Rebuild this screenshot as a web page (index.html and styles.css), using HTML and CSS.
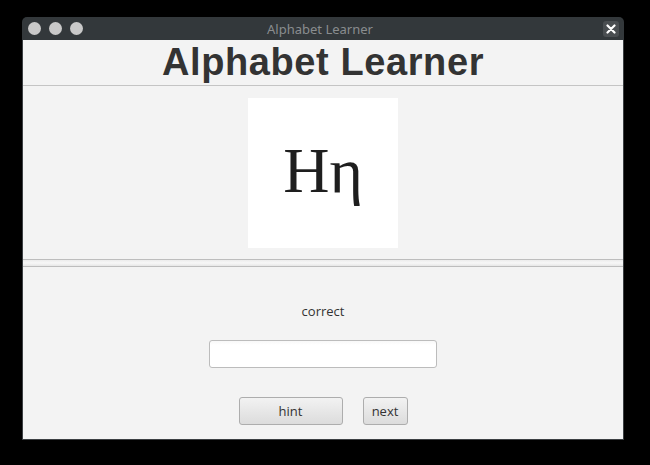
FILE: index.html
```html
<!DOCTYPE html>
<html>
<head>
<meta charset="utf-8">
<link rel="stylesheet" href="styles.css">
</head>
<body>
<div class="window">
  <div class="titlebar">
    <div class="dots"><span class="dot"></span><span class="dot"></span><span class="dot"></span></div>
    <div class="wtitle">Alphabet Learner</div>
    <div class="close">
      <svg width="10" height="10" viewBox="0 0 10 10"><path d="M1.5 1.5 L8.5 8.5 M8.5 1.5 L1.5 8.5" stroke="#ffffff" stroke-width="2.2" stroke-linecap="round"/></svg>
    </div>
  </div>
  <div class="content">
    <div class="header">Alphabet Learner</div>
    <div class="letter-area">
      <div class="letter-box">Hη</div>
    </div>
    <div class="divider"></div>
    <div class="bottom">
      <div class="status">correct</div>
      <input class="field" type="text">
      <div class="buttons">
        <button class="btn hint">hint</button>
        <button class="btn next">next</button>
      </div>
    </div>
  </div>
</div>
</body>
</html>
```
FILE: styles.css
```css
html, body {
  margin: 0;
  padding: 0;
  background: #000;
  width: 650px;
  height: 465px;
  overflow: hidden;
}
.window {
  margin: 17px 0 0 22px;
  width: 602px;
  height: 423px;
  display: flex;
  flex-direction: column;
}
.titlebar {
  height: 23px;
  background: #33383b;
  border-radius: 5px 5px 0 0;
  display: flex;
  align-items: center;
  font-family: "Noto Sans", "Open Sans", sans-serif;
}
.dots {
  display: flex;
  gap: 8px;
  padding-left: 6px;
}
.dot {
  width: 13px;
  height: 13px;
  border-radius: 50%;
  background: #c9c9c9;
}
.wtitle {
  flex: 1;
  text-align: center;
  color: #8a8d8f;
  font-size: 13px;
  padding-right: 46px;
}
.close {
  width: 16px;
  height: 16px;
  margin-right: 5px;
  display: flex;
  align-items: center;
  justify-content: center;
  border-radius: 3px;
  background: #4a4e51;
}
.content {
  flex: 1;
  background: #f3f3f3;
  border: 1px solid #3c4043;
  border-top: none;
  display: flex;
  flex-direction: column;
}
.header {
  height: 45px;
  border-bottom: 1px solid #c4c4c4;
  text-align: center;
  font-family: "Liberation Sans", Arial, sans-serif;
  font-weight: bold;
  font-size: 38px;
  letter-spacing: 0.6px;
  line-height: 45px;
  color: #333333;
}
.letter-area {
  height: 173px;
  display: flex;
  justify-content: center;
  padding-top: 12px;
  box-sizing: border-box;
}
.letter-box {
  width: 150px;
  height: 150px;
  background: #ffffff;
  display: flex;
  align-items: center;
  justify-content: center;
  font-family: "Liberation Serif", "Times New Roman", serif;
  font-size: 64px;
  color: #1e1e1e;
  padding-bottom: 4px;
  box-sizing: border-box;
}
.divider {
  height: 6px;
  border-top: 1px solid #bdbdbd;
  border-bottom: 1px solid #bdbdbd;
  background: linear-gradient(#ececec, #f7f7f7, #e6e6e6);
}
.bottom {
  flex: 1;
  display: flex;
  flex-direction: column;
  align-items: center;
  font-family: "Open Sans", "Noto Sans", sans-serif;
  font-size: 13px;
  color: #333;
}
.status {
  margin-top: 35px;
  height: 18px;
  line-height: 18px;
}
.field {
  margin-top: 20px;
  width: 228px;
  height: 28px;
  box-sizing: border-box;
  border: 1px solid #bcbcbc;
  border-radius: 3px;
  background: linear-gradient(#f8f8f8, #ffffff 4px);
  outline: none;
  padding: 0 6px;
}
.buttons {
  margin-top: 29px;
  display: flex;
  gap: 20px;
}
.btn {
  height: 28px;
  box-sizing: border-box;
  border: 1px solid #adadad;
  border-radius: 3px;
  background: linear-gradient(#f2f2f2, #dcdcdc);
  font-family: "Open Sans", "Noto Sans", sans-serif;
  font-size: 13px;
  color: #333;
  padding: 0;
}
.hint { width: 104px; }
.next { width: 45px; }
```
